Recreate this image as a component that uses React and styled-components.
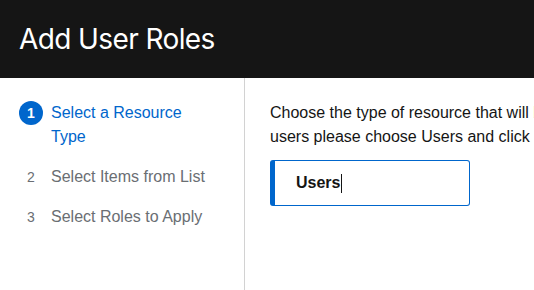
import React from 'react'
import styled, { createGlobalStyle } from 'styled-components'

const GlobalStyle = createGlobalStyle`
html, body {
  margin: 0;
  padding: 0;
  background: #fff;
  overflow: hidden;
}
body {
  font-family: "Liberation Sans", Arial, sans-serif;
  color: #151515;
}
`

const Page = styled.div`
width: 534px;
height: 290px;
display: flex;
flex-direction: column;
overflow: hidden;
`
const Header = styled.header`
height: 78px;
flex-shrink: 0;
background: #151515;
display: flex;
align-items: center;
padding-left: 19px;
`
const Title = styled.h1`
margin: 0;
font-family: Inter, "Open Sans", sans-serif;
font-weight: 400;
font-size: 28px;
letter-spacing: -0.6px;
color: #fff;
`
const Body = styled.div`
flex: 1;
display: flex;
`
const Nav = styled.nav`
width: 244px;
flex-shrink: 0;
border-right: 1px solid #d2d2d2;
padding-top: 23px;
display: flex;
flex-direction: column;
gap: 16px;
`
const Step = styled.div`
display: flex;
align-items: flex-start;
padding-left: 19px;
font-size: 16px;
line-height: 24px;
color: ${p => (p.current ? '#0066cc' : '#6a6e73')};
`
const Num = styled.span`
width: 24px;
height: 24px;
flex-shrink: 0;
margin-right: 8px;
border-radius: 50%;
display: flex;
align-items: center;
justify-content: center;
font-size: 14px;
font-weight: ${p => (p.current ? 700 : 400)};
background: ${p => (p.current ? '#0066cc' : 'transparent')};
color: ${p => (p.current ? '#fff' : '#6a6e73')};
`
const StepText = styled.span`
width: 166px;
`
const Content = styled.main`
padding: 23px 0 0 25px;
flex: 1;
min-width: 0;
`
const Lead = styled.p`
margin: 0 0 11px;
font-size: 16px;
line-height: 24px;
white-space: nowrap;
`
const Select = styled.div`
box-sizing: border-box;
width: 200px;
height: 46px;
border: 1px solid #0066cc;
border-left: 5px solid #0066cc;
border-radius: 3px;
display: flex;
align-items: center;
padding-left: 21px;
font-size: 16px;
font-weight: 700;
`
const Caret = styled.span`
display: inline-block;
width: 1px;
height: 19px;
background: #151515;
margin-left: 1px;
`

const steps = ['Select a Resource Type', 'Select Items from List', 'Select Roles to Apply']

export default function App() {
  return (
    <Page>
      <GlobalStyle />
      <Header>
        <Title>Add User Roles</Title>
      </Header>
      <Body>
        <Nav>
          {steps.map((s, i) => (
            <Step key={s} current={i === 0}>
              <Num current={i === 0}>{i + 1}</Num>
              <StepText>{s}</StepText>
            </Step>
          ))}
        </Nav>
        <Content>
          <Lead>
            Choose the type of resource that will be assigned roles. If you want to add roles to
            <br />
            users please choose Users and click Next.
          </Lead>
          <Select>
            Users<Caret />
          </Select>
        </Content>
      </Body>
    </Page>
  )
}
